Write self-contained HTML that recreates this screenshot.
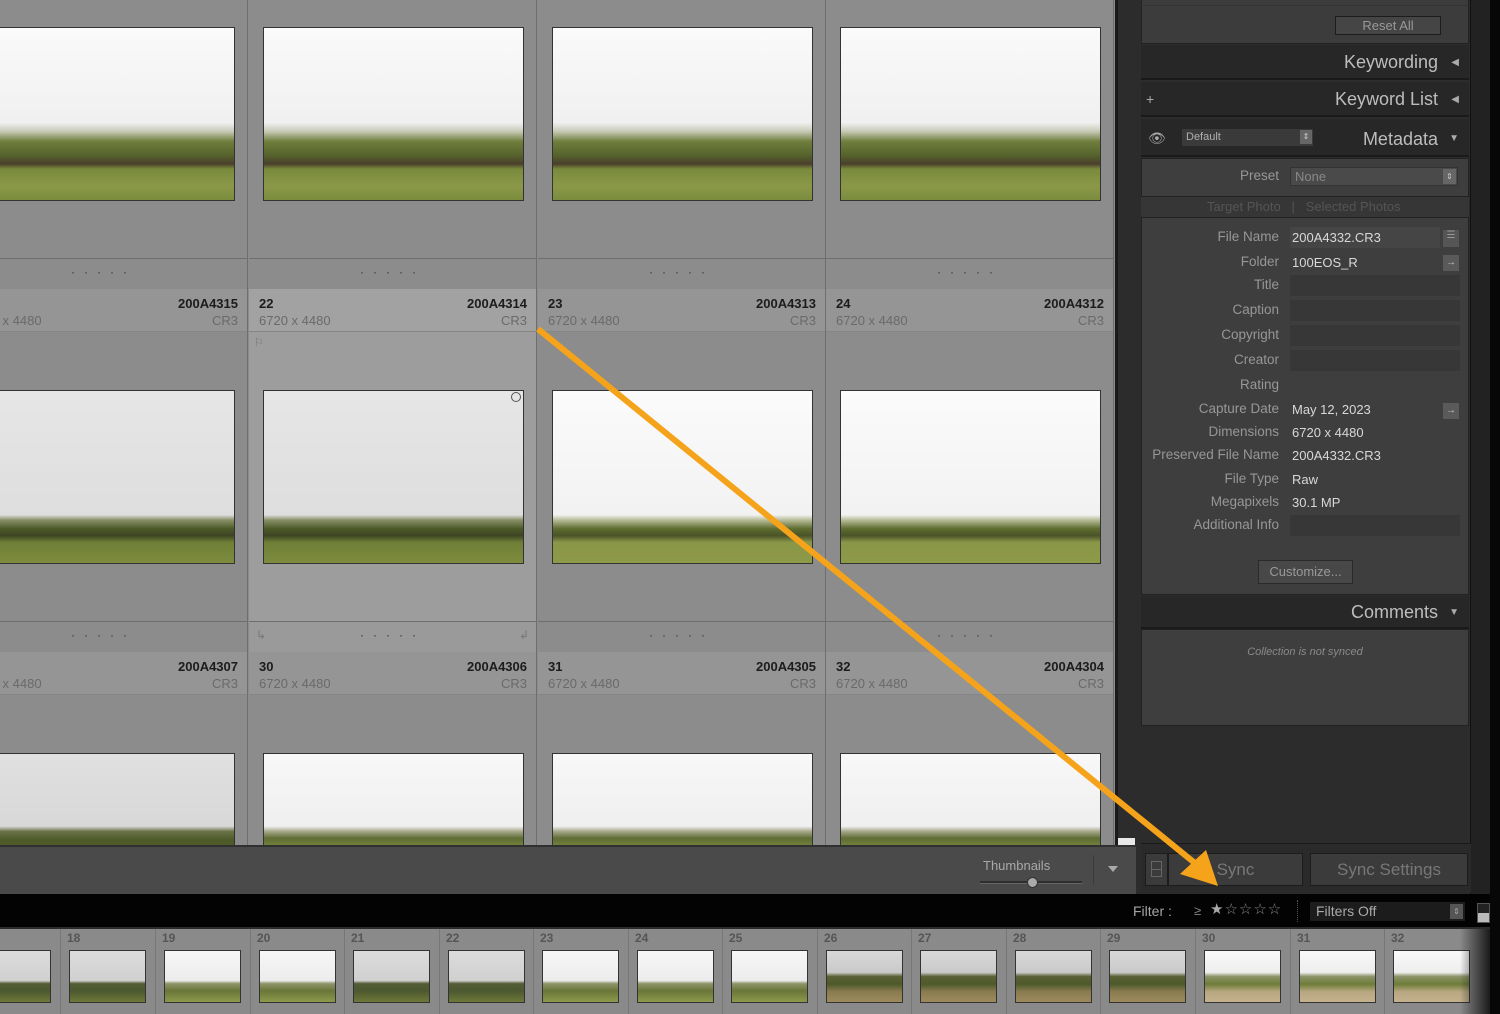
<!DOCTYPE html>
<html><head><meta charset="utf-8"><style>
*{margin:0;padding:0;box-sizing:border-box}
body{width:1500px;height:1014px;overflow:hidden;background:#000;position:relative;font-family:"Liberation Sans",sans-serif}
.a{position:absolute}
.cell{position:absolute;width:288px;height:363px;background:#8c8c8c;border-right:1px solid #6e6e6e}
.cell.sel{background:#9d9d9d}
.hd{position:absolute;left:0;top:0;width:100%;height:43px;background:#959595;border-bottom:1px solid #858585}
.sel .hd{background:#a2a2a2}
.num{position:absolute;left:10px;top:7px;font-size:13px;font-weight:bold;color:#1c1c1c}
.dim{position:absolute;left:10px;top:24px;font-size:13px;color:#6a6a6a}
.fn{position:absolute;right:9px;top:7px;font-size:13px;font-weight:bold;color:#1c1c1c}
.ext{position:absolute;right:9px;top:24px;font-size:13px;color:#6a6a6a}
.ds{position:absolute;left:0;bottom:0;width:100%;height:31px;border-top:1px solid #6e6e6e;background:#8c8c8c;text-align:center;font-size:12px;color:#333;line-height:26px;letter-spacing:9px}
.sel .ds{background:#9a9a9a}
.img{position:absolute;left:14px;top:101px;width:261px;height:174px;border:1px solid #333}
.r1{background:linear-gradient(#fafafa 0%,#f0f0f0 55%,#c8cbb8 60%,#6f7d3c 66%,#56632c 74%,#4a3f2c 79%,#7a8a3c 82%,#8a9848 92%,#7c8c3e 100%)}
.r2{background:linear-gradient(#e6e6e6 0%,#dedede 72%,#8a9068 75%,#4c5a28 80%,#3e4424 84%,#6f7f36 88%,#7e8c3e 100%)}
.r2b{background:linear-gradient(#fbfbfb 0%,#f2f2f2 72%,#b8bc98 75%,#5e6d30 80%,#4a5228 84%,#8a9648 88%,#8d9a48 100%)}
.r3{background:linear-gradient(#f8f8f8 0%,#efefef 42%,#a6a888 45%,#5f6c34 49%,#7b8a3c 55%)}
.lab{position:absolute;right:221px;font-size:13.5px;color:#979797;text-align:right;white-space:nowrap}
.val{position:absolute;left:1292px;font-size:13px;color:#d8d8d8;white-space:nowrap}
.fld{position:absolute;left:1290px;width:170px;height:21px;background:#373737}
.hdr{position:absolute;left:1141px;width:328px;background:#272727;color:#bdbdbd;font-size:18px;text-align:right;padding-right:31px}
.tri{position:absolute;right:10px;font-size:10px;color:#aaa}
.fs{position:absolute;top:929px;width:95px;height:85px;background:#8a8a8a;border-left:1px solid #777}
.fs b{position:absolute;left:6px;top:2px;font-size:12px;color:#555}
.fs i{position:absolute;left:8px;top:21px;width:77px;height:53px;border:1px solid #333}
.g1{background:linear-gradient(#dcdcdc 0%,#d0d0d0 58%,#535c35 64%,#4c5830 78%,#6e7838 100%)}
.g2{background:linear-gradient(#f7f7f7 0%,#ececec 58%,#8e946a 64%,#6a7638 78%,#8c9a4c 100%)}
.g3{background:linear-gradient(#d8d8d8 0%,#cacaca 42%,#5a6034 50%,#4e5a2a 65%,#8a7c50 80%,#9c8a5c 100%)}
.g4{background:linear-gradient(#f9f9f9 0%,#eeeeee 42%,#8c9268 50%,#6e7c38 65%,#b8a882 80%,#c4b08c 100%)}
.btn{position:absolute;background:#3b3b3b;border:1px solid #1c1c1c;color:#777;font-size:17px;text-align:center}
</style></head><body>

<div class="a" style="left:0;top:0;width:1115px;height:845px;background:#8c8c8c;overflow:hidden">
  <div class="cell" style="left:-40px;top:-74px"><div class="img r1"></div><div class="ds">·····</div></div>
  <div class="cell" style="left:249px;top:-74px"><div class="img r1"></div><div class="ds">·····</div></div>
  <div class="cell" style="left:538px;top:-74px"><div class="img r1"></div><div class="ds">·····</div></div>
  <div class="cell" style="left:826px;top:-74px"><div class="img r1"></div><div class="ds">·····</div></div>
  <div class="cell" style="left:-40px;top:289px"><div class="hd"><div class="dim">6720 x 4480</div><div class="fn">200A4315</div><div class="ext">CR3</div></div><div class="img r2"></div><div class="ds">·····</div></div>
  <div class="cell sel" style="left:249px;top:289px"><div class="hd"><div class="num">22</div><div class="dim">6720 x 4480</div><div class="fn">200A4314</div><div class="ext">CR3</div></div>
    <div class="a" style="left:5px;top:47px;font-size:11px;color:#777">⚐</div>
    <div class="img r2"></div>
    <div class="a" style="left:262px;top:103px;width:10px;height:10px;border:1px solid #555;border-radius:50%"></div>
    <div class="ds">·····<span class="a" style="left:7px;top:0;letter-spacing:0;color:#777">↳</span><span class="a" style="right:7px;top:0;letter-spacing:0;color:#777">↲</span></div></div>
  <div class="cell" style="left:538px;top:289px"><div class="hd"><div class="num">23</div><div class="dim">6720 x 4480</div><div class="fn">200A4313</div><div class="ext">CR3</div></div><div class="img r2b"></div><div class="ds">·····</div></div>
  <div class="cell" style="left:826px;top:289px"><div class="hd"><div class="num">24</div><div class="dim">6720 x 4480</div><div class="fn">200A4312</div><div class="ext">CR3</div></div><div class="img r2b"></div><div class="ds">·····</div></div>
  <div class="cell" style="left:-40px;top:652px"><div class="hd"><div class="dim">6720 x 4480</div><div class="fn">200A4307</div><div class="ext">CR3</div></div><div class="img r3" style="background:linear-gradient(#e0e0e0 0%,#d8d8d8 42%,#6a7248 45%,#4e5a2a 50%)"></div></div>
  <div class="cell" style="left:249px;top:652px"><div class="hd"><div class="num">30</div><div class="dim">6720 x 4480</div><div class="fn">200A4306</div><div class="ext">CR3</div></div><div class="img r3"></div></div>
  <div class="cell" style="left:538px;top:652px"><div class="hd"><div class="num">31</div><div class="dim">6720 x 4480</div><div class="fn">200A4305</div><div class="ext">CR3</div></div><div class="img r3"></div></div>
  <div class="cell" style="left:826px;top:652px"><div class="hd"><div class="num">32</div><div class="dim">6720 x 4480</div><div class="fn">200A4304</div><div class="ext">CR3</div></div><div class="img r3"></div></div>
</div>

<div class="a" style="left:1115px;top:0;width:21px;height:845px;background:#2c2c2c;border-left:3px solid #1a1a1a"></div>
<div class="a" style="left:1118px;top:838px;width:17px;height:7px;background:#e8e8e8"></div>

<div class="a" style="left:0;top:845px;width:1136px;height:49px;background:#4a4a4a;border-top:2px solid #303030"></div>
<div class="a" style="left:983px;top:858px;font-size:13px;color:#a8a8a8">Thumbnails</div>
<div class="a" style="left:980px;top:881px;width:102px;height:3px;background:#2e2e2e;border-bottom:1px solid #666"></div>
<div class="a" style="left:1027px;top:877px;width:11px;height:11px;background:#aaa;border:1px solid #333;border-radius:50%"></div>
<div class="a" style="left:1093px;top:855px;width:1px;height:30px;background:#3a3a3a"></div>
<div class="a" style="left:1108px;top:866px;width:0;height:0;border-left:5px solid transparent;border-right:5px solid transparent;border-top:6px solid #aaa"></div>

<div class="a" style="left:1136px;top:0;width:354px;height:894px;background:#2c2c2c"></div>
<div class="a" style="left:1470px;top:0;width:20px;height:894px;background:#222;border-left:1px solid #111"></div>
<div class="a" style="left:1490px;top:0;width:10px;height:1014px;background:#070707"></div>
<div class="a" style="left:1141px;top:-2px;width:328px;height:46px;background:#3c3c3c;border:1px solid #222"></div>
<div class="a" style="left:1141px;top:5px;width:328px;height:1px;background:#333"></div>
<div class="btn" style="left:1335px;top:16px;width:106px;height:19px;font-size:13px;line-height:17px;background:#454545;color:#999">Reset All</div>

<div class="hdr" style="top:45px;height:35px;line-height:35px;border-bottom:2px solid #1a1a1a">Keywording<span class="tri" style="top:0">◀</span></div>
<div class="hdr" style="top:82px;height:35px;line-height:35px;border-bottom:2px solid #1a1a1a"><span class="a" style="left:5px;top:0;font-size:14px;color:#aaa">+</span>Keyword List<span class="tri" style="top:0">◀</span></div>
<div class="hdr" style="top:119px;height:38px;line-height:40px;border-bottom:2px solid #1a1a1a">Metadata<span class="tri" style="top:0">▼</span></div>
<div class="a" style="left:1148px;top:130px;font-size:14px;color:#aaa">👁</div>
<div class="a" style="left:1182px;top:129px;width:131px;height:17px;background:#3a3a3a;font-size:11px;color:#b0b0b0;padding-left:4px;line-height:17px">Default<span class="a" style="right:1px;top:1px;width:12px;height:14px;background:#666;color:#ccc;font-size:8px;text-align:center;line-height:14px">⇕</span></div>

<div class="a" style="left:1141px;top:158px;width:328px;height:437px;background:#3e3e3e;border:1px solid #222"></div>
<div class="a" style="left:1141px;top:196px;width:328px;height:22px;background:#363636;border-top:1px solid #222;border-bottom:1px solid #222"></div>
<div class="a" style="left:1207px;top:199px;font-size:13px;color:#555">Target Photo&nbsp;&nbsp;&nbsp;|&nbsp;&nbsp;&nbsp;Selected Photos</div>
<div class="lab" style="top:168px">Preset</div>
<div class="a" style="left:1290px;top:167px;width:168px;height:19px;background:#4a4a4a;border:1px solid #333;font-size:13px;color:#888;padding-left:4px;line-height:17px">None<span class="a" style="right:1px;top:1px;width:13px;height:15px;background:#666;color:#ccc;font-size:8px;text-align:center;line-height:15px">⇕</span></div>

<div class="a" style="left:1290px;top:227px;width:150px;height:21px;background:#454545"></div>
<div class="a" style="left:1443px;top:230px;width:16px;height:17px;background:#555;color:#999;font-size:10px;text-align:center">☰</div>
<div class="a" style="left:1443px;top:255px;width:16px;height:16px;background:#5a5a5a;color:#ccc;font-size:10px;text-align:center;line-height:16px">→</div>
<div class="a" style="left:1443px;top:403px;width:16px;height:16px;background:#5a5a5a;color:#ccc;font-size:10px;text-align:center;line-height:16px">→</div>
<div class="fld" style="top:275px"></div><div class="fld" style="top:300px"></div><div class="fld" style="top:325px"></div><div class="fld" style="top:350px"></div><div class="fld" style="top:515px"></div>

<div class="lab" style="top:229px">File Name</div><div class="val" style="top:230px">200A4332.CR3</div>
<div class="lab" style="top:254px">Folder</div><div class="val" style="top:255px">100EOS_R</div>
<div class="lab" style="top:277px">Title</div>
<div class="lab" style="top:302px">Caption</div>
<div class="lab" style="top:327px">Copyright</div>
<div class="lab" style="top:352px">Creator</div>
<div class="lab" style="top:377px">Rating</div>
<div class="lab" style="top:401px">Capture Date</div><div class="val" style="top:402px">May 12, 2023</div>
<div class="lab" style="top:424px">Dimensions</div><div class="val" style="top:425px">6720 x 4480</div>
<div class="lab" style="top:447px">Preserved File Name</div><div class="val" style="top:448px">200A4332.CR3</div>
<div class="lab" style="top:471px">File Type</div><div class="val" style="top:472px">Raw</div>
<div class="lab" style="top:494px">Megapixels</div><div class="val" style="top:495px">30.1 MP</div>
<div class="lab" style="top:517px">Additional Info</div>
<div class="btn" style="left:1258px;top:560px;width:95px;height:24px;font-size:13px;line-height:22px;background:#484848;color:#999;border-color:#2a2a2a">Customize...</div>

<div class="hdr" style="top:596px;height:33px;line-height:33px;border-bottom:2px solid #1a1a1a">Comments<span class="tri" style="top:0">▼</span></div>
<div class="a" style="left:1141px;top:629px;width:328px;height:97px;background:#3e3e3e;border:1px solid #222"></div>
<div class="a" style="left:1141px;top:646px;width:328px;text-align:center;font-size:11px;font-style:italic;color:#8a8a8a">Collection is not synced</div>

<div class="a" style="left:1141px;top:843px;width:330px;height:50px;background:#2a2a2a;border-top:1px solid #1a1a1a"></div>
<div class="btn" style="left:1145px;top:853px;width:23px;height:33px"></div>
<div class="a" style="left:1151px;top:861px;width:11px;height:16px;border:1px solid #666"></div>
<div class="a" style="left:1151px;top:869px;width:11px;height:1px;background:#666"></div>
<div class="btn" style="left:1168px;top:853px;width:135px;height:33px;line-height:31px">Sync</div>
<div class="btn" style="left:1310px;top:853px;width:158px;height:33px;line-height:31px">Sync Settings</div>

<div class="a" style="left:0;top:894px;width:1490px;height:35px;background:#030303;border-bottom:2px solid #2a2a2a"></div>
<div class="a" style="left:1133px;top:903px;font-size:14px;color:#a5a5a5">Filter :</div>
<div class="a" style="left:1194px;top:903px;font-size:13px;color:#888">≥</div>
<div class="a" style="left:1210px;top:900px;font-size:15px;color:#aaa;letter-spacing:1px">★<span style="color:#888">☆☆☆☆</span></div>
<div class="a" style="left:1297px;top:900px;width:1px;height:22px;border-left:1px dotted #555"></div>
<div class="a" style="left:1310px;top:902px;width:155px;height:19px;background:#1c1c1c;font-size:14px;color:#aaa;padding-left:6px;line-height:19px">Filters Off<span class="a" style="right:2px;top:2px;width:13px;height:15px;background:#555;color:#aaa;font-size:8px;text-align:center;line-height:15px">⇕</span></div>
<div class="a" style="left:1477px;top:903px;width:13px;height:20px;border:1px solid #555;background:linear-gradient(#222 50%,#bbb 50%)"></div>

<div class="a" style="left:0;top:929px;width:1490px;height:85px;background:#8a8a8a"></div>
<div class="fs" style="left:-35px"><i class="g1"></i></div>
<div class="fs" style="left:60px"><b>18</b><i class="g1"></i></div>
<div class="fs" style="left:155px"><b>19</b><i class="g2"></i></div>
<div class="fs" style="left:250px"><b>20</b><i class="g2"></i></div>
<div class="fs" style="left:344px"><b>21</b><i class="g1"></i></div>
<div class="fs" style="left:439px"><b>22</b><i class="g1"></i></div>
<div class="fs" style="left:533px"><b>23</b><i class="g2"></i></div>
<div class="fs" style="left:628px"><b>24</b><i class="g2"></i></div>
<div class="fs" style="left:722px"><b>25</b><i class="g2"></i></div>
<div class="fs" style="left:817px"><b>26</b><i class="g3"></i></div>
<div class="fs" style="left:911px"><b>27</b><i class="g3"></i></div>
<div class="fs" style="left:1006px"><b>28</b><i class="g3"></i></div>
<div class="fs" style="left:1100px"><b>29</b><i class="g3"></i></div>
<div class="fs" style="left:1195px"><b>30</b><i class="g4"></i></div>
<div class="fs" style="left:1290px"><b>31</b><i class="g4"></i></div>
<div class="fs" style="left:1384px"><b>32</b><i class="g4"></i></div>
<div class="a" style="left:1460px;top:929px;width:30px;height:85px;background:linear-gradient(90deg,rgba(40,40,40,0),#1a1a1a)"></div>

<svg class="a" style="left:0;top:0" width="1500" height="1014">
<line x1="538" y1="329" x2="1196" y2="864" stroke="#f5a31a" stroke-width="6"/>
<polygon points="1218,886 1180,874 1206,850" fill="#f5a31a"/>
</svg>
</body></html>
